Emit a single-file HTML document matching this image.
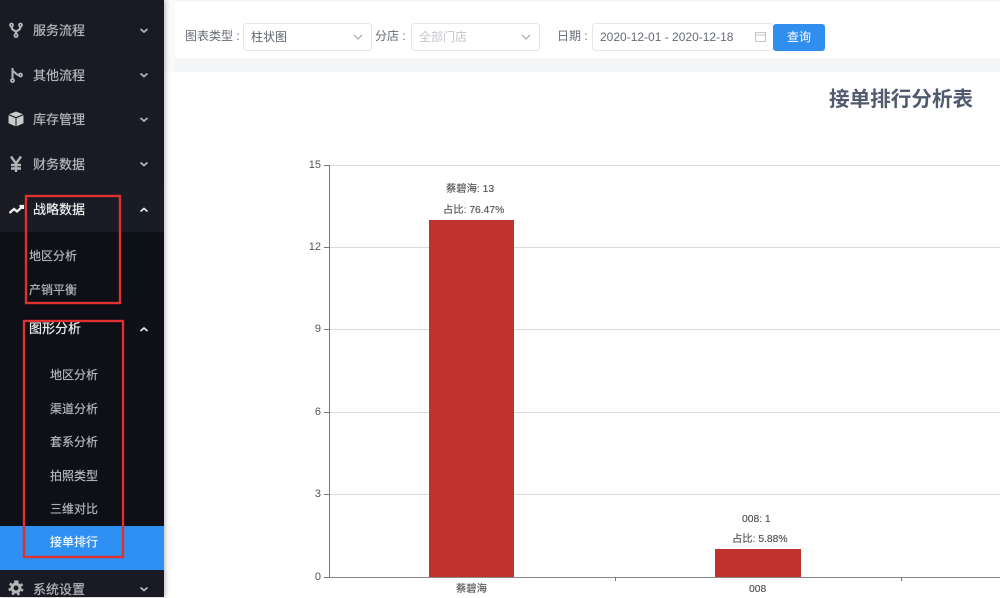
<!DOCTYPE html>
<html><head><meta charset="utf-8">
<style>
html,body{margin:0;padding:0;width:1000px;height:597px;overflow:hidden;background:#fff;font-family:"Liberation Sans","Noto Sans CJK SC",sans-serif}
.a{position:absolute;white-space:nowrap}
#side{position:absolute;left:0;top:0;width:164px;height:597px;background:#191a23;box-shadow:1px 0 5px rgba(0,0,0,.3)}
.m{font-size:13px;color:#b4b5b8;line-height:16px;text-shadow:0 0 .6px #b4b5b8}
.w{color:#eceded;text-shadow:0 0 .6px #eceded}
.s{font-size:12px;color:#b4b5b8;line-height:16px;text-shadow:0 0 .6px #aeafb2}
.lab{font-size:12px;color:#666b75;line-height:16px}
.box{position:absolute;background:#fff;border:1px solid #e3e6eb;border-radius:4px;box-sizing:border-box}
.t{font-size:10.300px;color:#555;line-height:12px;text-shadow:0 0 .5px #777}
.g{position:absolute;left:329px;width:671px;height:1px;background:#dcdcdc}
.y{position:absolute;left:324px;width:5px;height:1px;background:#777}
.yl{position:absolute;width:16px;left:305px;text-align:right;font-size:11px;color:#555;line-height:12px}
.red{position:absolute;border:2px solid #e0312f;box-sizing:border-box;box-shadow:0 0 1px #e0312f,inset 0 0 1px #e0312f}
</style></head><body>
<div class="a" style="left:164px;top:0;width:836px;height:597px;background:#fff"></div>
<div class="a" style="left:175px;top:0;width:825px;height:2px;background:#f5f6f7"></div>
<div class="a" style="left:175px;top:58px;width:825px;height:14px;background:#f4f5f7"></div>
<div class="a" style="left:164px;top:0;width:11px;height:72px;background:#fafafb"></div>

<div id="side">
<div class="a" style="left:0;top:187px;width:164px;height:45px;background:#1a1b24"></div>
<div class="a" style="left:0;top:232px;width:164px;height:365px;background:#0e0f17"></div>
<div class="a" style="left:0;top:526px;width:164px;height:44px;background:#2f90f3"></div>
<div class="a" style="left:0;top:570px;width:164px;height:27px;background:#191a23"></div>

<div class="a m" style="left:33px;top:23px">服务流程</div>
<div class="a m" style="left:33px;top:68px">其他流程</div>
<div class="a m" style="left:33px;top:112px">库存管理</div>
<div class="a m" style="left:33px;top:157px">财务数据</div>
<div class="a m w" style="left:33px;top:202px">战略数据</div>
<div class="a s" style="left:29px;top:248px">地区分析</div>
<div class="a s" style="left:29px;top:282px">产销平衡</div>
<div class="a m w" style="left:29px;top:321px">图形分析</div>
<div class="a s" style="left:50px;top:367px">地区分析</div>
<div class="a s" style="left:50px;top:401px">渠道分析</div>
<div class="a s" style="left:50px;top:434px">套系分析</div>
<div class="a s" style="left:50px;top:468px">拍照类型</div>
<div class="a s" style="left:50px;top:501px">三维对比</div>
<div class="a s" style="left:50px;top:534px;color:#f2f7fd;text-shadow:0 0 .6px #f2f7fd">接单排行</div>
<div class="a m" style="left:33px;top:582px">系统设置</div>

<svg class="a" style="left:0;top:0" width="164" height="597" fill="none" stroke="#b4b5b8" stroke-width="1.800">
<path d="M140.500 29l3.500 3 3.500-3M140.500 73.500l3.500 3 3.500-3M140.500 118l3.500 3 3.500-3M140.500 162.500l3.500 3 3.500-3M140.500 587.500l3.500 3 3.500-3"/>
<path stroke="#e4e4e6" d="M140.500 211.500l3.500-3 3.500 3M140.500 331l3.500-3 3.500 3"/>
<path stroke-width="2.200" d="M11.500 26.500c0 3 2 3.500 4.500 5c2.500-1.500 4.500-2 4.500-5M16 31v3"/>
<circle cx="11.500" cy="25" r="1.500"/><circle cx="20.500" cy="25" r="1.500"/><circle cx="16" cy="35.500" r="1.600"/>
<path stroke-width="2" d="M12.500 68v12M13 71c2 1 3 4 6 4"/>
<circle cx="12.500" cy="80.500" r="1.500"/><circle cx="20.500" cy="75" r="1.500"/>
<path fill="#c9cacc" stroke="none" d="M16 111.500l7 2.800-7 2.800-7-2.800zM8.500 115.300l7 2.800v8.200l-7-3zM23.500 115.300l-7 2.800v8.200l7-3z"/>
<path stroke-width="2.400" d="M11 156.500l5 7 5-7M16 163.500v8.500M11 165h10M11 168.500h10"/>
<path stroke="#f0f0f1" stroke-width="2.200" d="M9.500 213l4.500-4 3 2.500 5.500-5M19.500 206h3.500v3"/>
<circle cx="16" cy="588" r="4" stroke-width="3"/>
<path stroke-width="2.200" stroke-dasharray="2.600 2.900" d="M16 581.500a6.500 6.500 0 1 1-.01 0"/>
</svg>
</div>

<div class="a lab" style="left:185px;top:28px">图表类型 :</div>
<div class="box" style="left:243px;top:23px;width:129px;height:28px"></div>
<div class="a" style="left:251px;top:29px;font-size:12px;color:#5f6470;line-height:16px">柱状图</div>
<div class="a lab" style="left:375px;top:28px">分店 :</div>
<div class="box" style="left:411px;top:23px;width:129px;height:28px"></div>
<div class="a" style="left:419px;top:29px;font-size:12px;color:#c3c6cc;line-height:16px">全部门店</div>
<div class="a lab" style="left:557px;top:28px">日期 :</div>
<div class="box" style="left:592px;top:23px;width:182px;height:28px"></div>
<div class="a" style="left:600px;top:29px;font-size:12px;color:#666b75;line-height:16px">2020-12-01 - 2020-12-18</div>
<div class="a" style="left:773px;top:24px;width:52px;height:27px;background:#2f8eee;border-radius:3px;color:#fff;font-size:12px;line-height:27px;text-align:center">查询</div>
<svg class="a" style="left:0;top:0" width="1000" height="60" fill="none" stroke="#9a9ea6" stroke-width="1.100">
<path d="M354 35l4 4 4-4M522 35l4 4 4-4"/>
<path stroke="#c3c6cc" d="M755.500 32.500h10v9h-10zM755.500 35h10"/>
</svg>

<div class="a" style="left:829px;top:86px;font-size:20.600px;font-weight:bold;color:#515a6e;line-height:28px">接单排行分析表</div>

<div class="g" style="top:165px"></div>
<div class="g" style="top:247px"></div>
<div class="g" style="top:329px"></div>
<div class="g" style="top:412px"></div>
<div class="g" style="top:494px"></div>
<div class="a" style="left:329px;top:165px;width:1px;height:412px;background:#777"></div>
<div class="a" style="left:329px;top:577px;width:671px;height:1px;background:#888"></div>
<div class="y" style="top:165px"></div><div class="y" style="top:247px"></div><div class="y" style="top:329px"></div><div class="y" style="top:412px"></div><div class="y" style="top:494px"></div><div class="y" style="top:577px"></div>
<div class="a" style="left:615px;top:577px;width:1px;height:4px;background:#777"></div>
<div class="a" style="left:901px;top:577px;width:1px;height:4px;background:#777"></div>
<div class="yl" style="top:159px">15</div>
<div class="yl" style="top:241px">12</div>
<div class="yl" style="top:323px">9</div>
<div class="yl" style="top:406px">6</div>
<div class="yl" style="top:488px">3</div>
<div class="yl" style="top:571px">0</div>

<div class="a" style="left:429px;top:220px;width:85px;height:357px;background:#c0322d"></div>
<div class="a" style="left:715px;top:549px;width:86px;height:28px;background:#c0322d"></div>

<div class="a t" style="left:446px;top:184px">蔡碧海: 13</div>
<div class="a t" style="left:443px;top:205px">占比: 76.47%</div>
<div class="a t" style="left:742px;top:514px">008: 1</div>
<div class="a t" style="left:732px;top:534px">占比: 5.88%</div>
<div class="a t" style="left:456px;top:584px">蔡碧海</div>
<div class="a t" style="left:749px;top:584px">008</div>

<div class="red" style="left:25px;top:195px;width:96px;height:109px"></div>
<div class="red" style="left:23px;top:320px;width:101px;height:238px"></div>
</body></html>
